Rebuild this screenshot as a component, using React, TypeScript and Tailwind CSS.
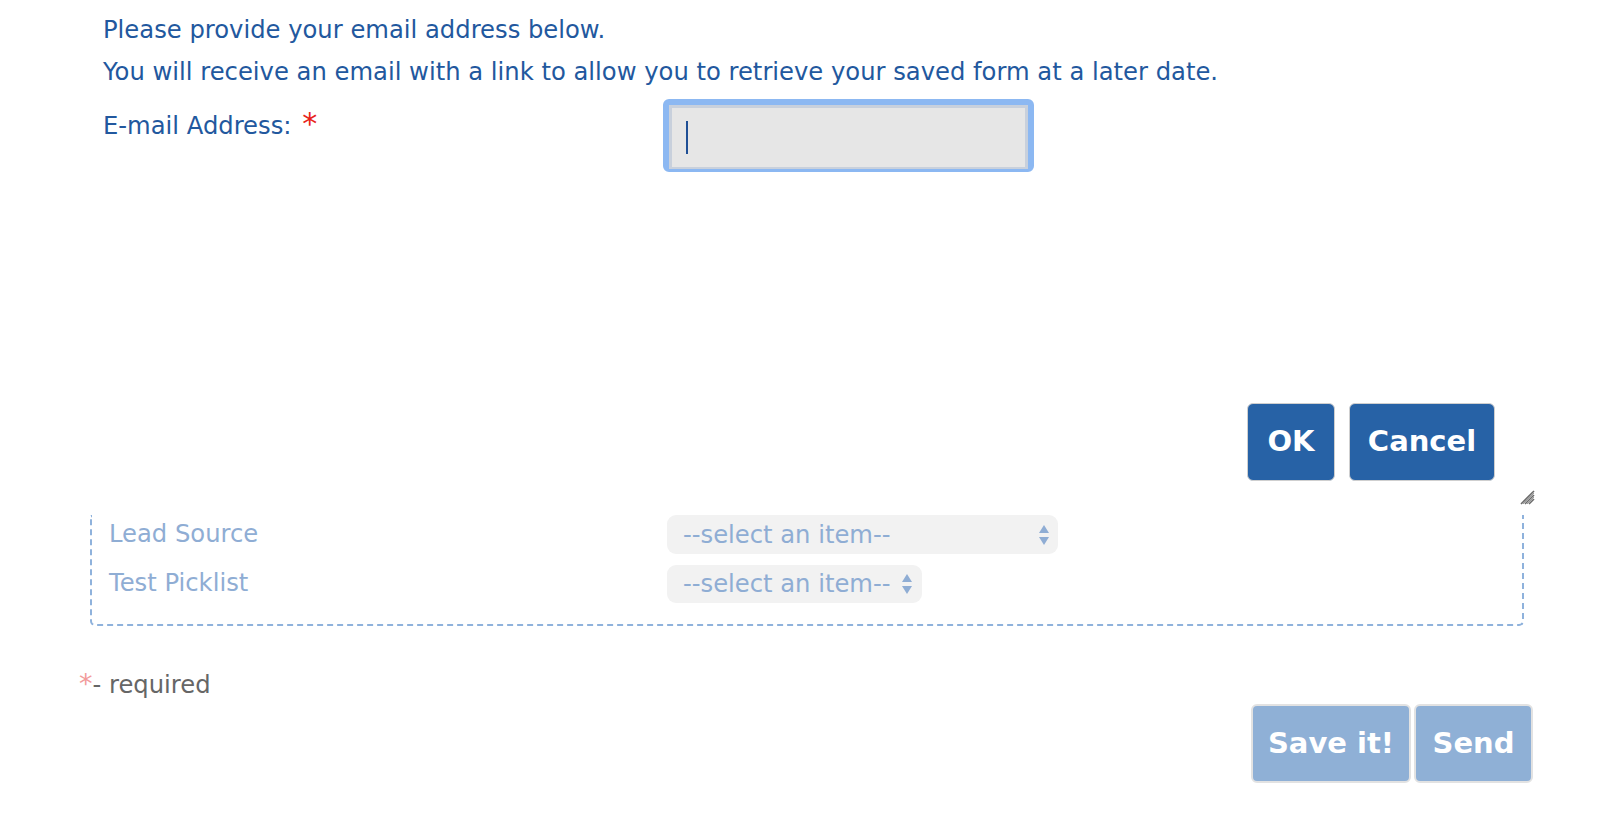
import React from "react";

function Arrows() {
  return (
    <svg width="12" height="24" viewBox="0 0 12 24" className="shrink-0">
      <polygon points="6,2 11,10 1,10" fill="#8fadd4" />
      <polygon points="1,14 11,14 6,22" fill="#8fadd4" />
    </svg>
  );
}

function Grip() {
  return (
    <svg width="15" height="15" viewBox="0 0 15 15">
      <line x1="1" y1="14" x2="14" y2="1" stroke="#6b6b6b" strokeWidth="1.6" />
      <line x1="5" y1="14" x2="14" y2="5" stroke="#6b6b6b" strokeWidth="1.6" />
      <line x1="9" y1="14" x2="14" y2="9" stroke="#6b6b6b" strokeWidth="1.6" />
      <line x1="3" y1="14" x2="14" y2="3" stroke="#9a9a9a" strokeWidth="1" />
      <line x1="7" y1="14" x2="14" y2="7" stroke="#9a9a9a" strokeWidth="1" />
    </svg>
  );
}

export default function App() {
  const btnFont = { fontFamily: '"DejaVu Sans", sans-serif' } as React.CSSProperties;
  return (
    <div className="w-[1600px] h-[836px] bg-white overflow-hidden text-[24.25px]" style={{ fontFamily: '"DejaVu Sans", Verdana, sans-serif' }}>
      <div className="pl-[103px] pt-[9px] text-[#22589e] leading-[42px]">
        <div>Please provide your email address below.</div>
        <div>You will receive an email with a link to allow you to retrieve your saved form at a later date.</div>
        <div className="flex items-start">
          <div className="w-[560px] mt-[12px]">
            E-mail Address: <span className="text-[#e8231a] text-[30px] leading-[30px] ml-[3px]">*</span>
          </div>
          <div className="mt-[6px] w-[371px] h-[73px] rounded-[6px] border-[6px] border-b-[3px] border-[#8cb8f2] bg-[#c8d0dc] p-[3px] pb-[2px]">
            <div className="h-full w-full bg-[#e6e6e6] flex items-center pl-[14px]">
              <div className="w-[2px] h-[33px] bg-[#1f4f95]" />
            </div>
          </div>
        </div>
      </div>

      <div className="flex justify-end pr-[105px] mt-[231px] gap-[14px]" style={btnFont}>
        <button className="h-[78px] w-[88px] rounded-[6px] border border-[#cfcfcf] bg-[#2762a6] text-white font-bold text-[29px]">OK</button>
        <button className="h-[78px] w-[146px] rounded-[6px] border border-[#cfcfcf] bg-[#2762a6] text-white font-bold text-[29px]">Cancel</button>
      </div>

      <div className="flex justify-end pr-[65px] mt-[9px] h-[15px]">
        <Grip />
      </div>

      <div className="ml-[90px] w-[1434px] mt-[10px] h-[111px] border-2 border-t-0 border-dashed border-[#8fb2dc] rounded-b-[5px] pl-[17px] text-[#8fadd4] leading-[38px]">
        <div className="flex items-center h-[39px]">
          <div className="w-[558px] -mt-[2px]">Lead Source</div>
          <div className="w-[391px] h-[39px] rounded-[9px] bg-[#f2f2f2] flex items-center justify-between pl-[16px] pr-[8px]">
            <span>--select an item--</span>
            <Arrows />
          </div>
        </div>
        <div className="flex items-center h-[38px] mt-[11px]">
          <div className="w-[558px] -mt-[3px]">Test Picklist</div>
          <div className="w-[255px] h-[38px] rounded-[9px] bg-[#f2f2f2] flex items-center pl-[16px] pr-[8px] gap-[10px]">
            <span>--select an item--</span>
            <Arrows />
          </div>
        </div>
      </div>

      <div className="pl-[79px] mt-[43px] leading-[30px] text-[#666666]">
        <span className="text-[#f29b9b] text-[27px]">*</span>- required
      </div>

      <div className="flex justify-end pr-[67px] mt-[4px] gap-[3px]" style={btnFont}>
        <button className="h-[79px] w-[160px] rounded-[6px] border-2 border-[#e2e2e2] bg-[#8fb0d6] text-white font-bold text-[29px]">Save it!</button>
        <button className="h-[79px] w-[119px] rounded-[6px] border-2 border-[#e2e2e2] bg-[#8fb0d6] text-white font-bold text-[29px]">Send</button>
      </div>
    </div>
  );
}
